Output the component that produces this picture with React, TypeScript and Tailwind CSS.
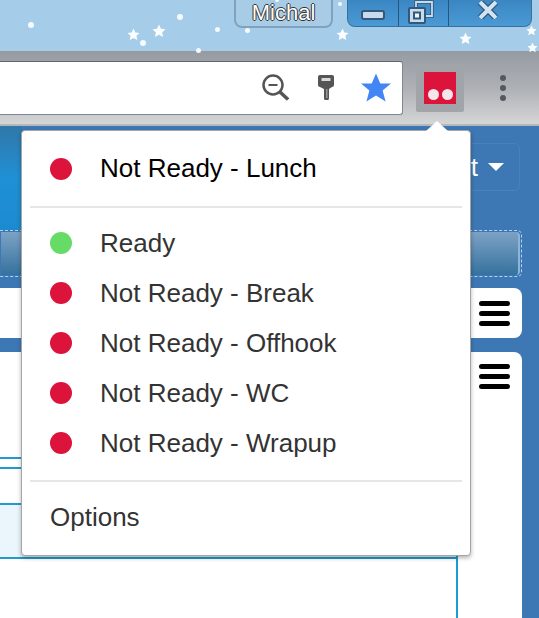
const stars: [number, number, number][] = [
  [133, 34, 13], [159, 31, 14], [342, 34, 13], [465, 38, 13], [531, 30, 11], [532, 47, 11],
];
const dots: [number, number, number][] = [
  [31, 25, 6], [143, 43, 6], [180, 17, 6], [198, 50, 5], [217, 29, 5], [247, 30, 5], [277, 0, 4], [340, 4, 4],
];
const Star = ({ x, y, s }: { x: number; y: number; s: number }) => (
  <svg className="absolute" style={{ left: x - s / 2, top: y - s / 2 }} width={s} height={s} viewBox="0 0 24 24">
    <path d="M12 1l3.4 7.2 7.6 1-5.6 5.3 1.500 7.800L12 18.500l-6.900 3.800 1.500-7.800L1 9.200l7.600-1z" fill="#fbfdff" />
  </svg>
);
const items: [string, string][] = [
  ["Ready", "#66dc66"],
  ["Not Ready - Break", "#dc143c"],
  ["Not Ready - Offhook", "#dc143c"],
  ["Not Ready - WC", "#dc143c"],
  ["Not Ready - Wrapup", "#dc143c"],
];
const Burger = () => (
  <div className="flex w-[31px] flex-col gap-[5px]">
    <div className="h-[5px] rounded-full bg-black" />
    <div className="h-[5px] rounded-full bg-black" />
    <div className="h-[5px] rounded-full bg-black" />
  </div>
);

export default function App() {
  return (
    <div className="relative flex h-[618px] w-[539px] flex-col overflow-hidden bg-white font-['Liberation_Sans',Arial,sans-serif]">
      {/* Desktop strip with window caption */}
      <div className="relative h-[51px] shrink-0 bg-[#a5cdea]">
        <div className="flex h-[28px] justify-end pr-[7px]">
          <div className="mr-[14px] flex h-[28px] w-[99px] items-center justify-center rounded-b-[8px] border-2 border-t-0 border-[#7fa3bf] bg-[#a9cce6] text-[22px] leading-none text-white [text-shadow:-1px_0_#333,1px_0_#333,0_-1px_#333,0_1px_#333]">
            Michal
          </div>
          <div className="flex h-[27px] w-[185px] overflow-hidden rounded-b-[8px] border border-t-0 border-[#3a6f99] bg-gradient-to-b from-[#3a86c2] to-[#4a9ad6]">
            <div className="flex w-[51px] items-center justify-center border-r border-[#28567c]">
              <div className="mt-[3px] h-[10px] w-[24px] rounded-[3px] border-2 border-[#34587a] bg-[#c6dcee]" />
            </div>
            <div className="flex w-[50px] items-start justify-start pl-[9px] pt-0 border-r border-[#28567c]">
              <svg width="26" height="25" viewBox="0 0 26 25">
                <path d="M8 8V2h16v14h-6" fill="none" stroke="#33587a" strokeWidth="3.500" />
                <path d="M8 8V2h16v14h-6" fill="none" stroke="#c6dcee" strokeWidth="1.800" />
                <rect x="1" y="8" width="16" height="15" rx="1" fill="#c6dcee" stroke="#33587a" strokeWidth="2" />
                <rect x="6" y="12.500" width="6" height="6" fill="#f2f7fb" stroke="#33587a" strokeWidth="2" />
              </svg>
            </div>
            <div className="flex flex-1 items-start justify-center pr-[4px] pt-[1px]">
              <svg width="24" height="18" viewBox="0 0 24 18">
                <path d="M4 1l16 16M20 1L4 17" stroke="#33587a" strokeWidth="6.500" />
                <path d="M4 1l16 16M20 1L4 17" stroke="#d2e3f1" strokeWidth="4" />
              </svg>
            </div>
          </div>
        </div>
        {stars.map(([x, y, s], i) => <Star key={i} x={x} y={y} s={s} />)}
        {dots.map(([x, y, s], i) => (
          <div key={i} className="absolute rounded-full bg-[#f4fafe]" style={{ left: x - s / 2, top: y - s / 2, width: s, height: s }} />
        ))}
      </div>

      {/* Browser toolbar */}
      <div className="flex h-[75px] shrink-0 flex-col bg-gradient-to-b from-[#969ba2] via-[#aeb1b6] to-[#d8d8d8]">
        <div className="flex flex-1 items-center">
          <div className="flex h-[54px] w-[403px] items-center justify-end rounded-r-[3px] border-y border-r border-[#7f8790] border-t-[#5f676e] bg-white pr-[11px]">
            <svg className="mr-[29px]" width="27" height="27" viewBox="0 0 27 27">
              <circle cx="11" cy="11" r="9.500" fill="none" stroke="#555" strokeWidth="2.500" />
              <path d="M6.500 11h9" stroke="#555" strokeWidth="2" />
              <path d="M18 18l8 7.500" stroke="#555" strokeWidth="3.500" />
            </svg>
            <svg className="mr-[27px]" width="16" height="25" viewBox="0 0 16 25">
              <path d="M2 0h12a2 2 0 0 1 2 2v8a2 2 0 0 1-2 2l-3 2v9a2.500 2.500 0 0 1-5 0v-9L2 12a2 2 0 0 1-2-2V2a2 2 0 0 1 2-2z" fill="#555" />
              <rect x="3.500" y="3" width="9" height="3" fill="#d9d9d9" />
              <rect x="8" y="14" width="1.500" height="9" fill="#999" />
            </svg>
            <svg width="30" height="29" viewBox="0 0 30 28">
              <path d="M15 0l4.300 10h10.700l-8.400 7 3 11L15 22l-9.600 6 3-11L0 10h10.700z" fill="#4285f4" />
            </svg>
          </div>
          <div className="ml-[13px] flex h-[48px] w-[48px] items-center justify-center rounded-[2px] bg-[#a1a5aa]">
            <div className="flex h-[32px] w-[32px] items-end justify-center gap-[3px] bg-[#dc143c] pb-[4px]">
              <div className="h-[11px] w-[11px] rounded-full bg-[#f6e6ea]" />
              <div className="h-[11px] w-[11px] rounded-full bg-[#f6e6ea]" />
            </div>
          </div>
          <div className="ml-[36px] flex flex-col gap-[4px]">
            <div className="h-[6px] w-[6px] rounded-full bg-[#55595e]" />
            <div className="h-[6px] w-[6px] rounded-full bg-[#55595e]" />
            <div className="h-[6px] w-[6px] rounded-full bg-[#55595e]" />
          </div>
        </div>
        <div className="h-[2px] bg-[#b5b7bb]" />
      </div>

      {/* Page beneath the popup */}
      <div className="flex flex-1 flex-col bg-[#3d78b5]">
        <div className="flex h-[104px] shrink-0 items-start justify-between">
          <div className="h-full w-[22px] bg-gradient-to-b from-[#2f78a8] via-[#1f90d6] to-[#1d8ad0]" />
          <div className="mr-[19px] mt-[17px] flex h-[48px] w-[80px] items-center justify-end rounded-[6px] border border-[#4a81ba] pr-[15px] text-[26px] text-white">
            <span className="mr-[10px]">t</span>
            <div className="h-0 w-0 border-x-[8px] border-t-[8px] border-x-transparent border-t-white" />
          </div>
        </div>
        <div className="mr-[17px] h-[47px] shrink-0 rounded-r-[5px] border-y border-r border-dashed border-[#b5d2ec] p-[1px]">
          <div className="h-full rounded-r-[4px] border-r-2 border-[#8fb4da] bg-gradient-to-b from-[#7ca2c4] to-[#34729f]" />
        </div>
        <div className="h-[11px] shrink-0" />
        <div className="flex h-[50px] shrink-0 justify-between">
          <div className="w-[60px] bg-white" />
          <div className="mr-[17px] flex w-[51px] items-center justify-end rounded-r-[8px] bg-white pr-[12px]">
            <Burger />
          </div>
        </div>
        <div className="h-[14px] shrink-0" />
        <div className="mr-[17px] flex flex-1 rounded-tr-[8px] bg-white">
          <div className="flex w-[458px] flex-col border-r-2 border-[#1f9bcf]">
            <div className="h-[105px]" />
            <div className="h-[12px] border-y-2 border-[#1f9bcf]" />
            <div className="h-[34px]" />
            <div className="h-[56px] border-y-2 border-[#1f9bcf] bg-[#eaf5fc]" />
          </div>
          <div className="flex flex-1 justify-end pr-[12px] pt-[12px]">
            <Burger />
          </div>
        </div>
      </div>

      {/* Status popup */}
      <div className="absolute left-[21px] top-[130px] w-[450px] rounded-[4px] border border-[#a5a5a5] bg-white pb-[3px] shadow-[0_2px_4px_rgba(0,0,0,0.3)]">
        <div className="absolute -top-[10px] right-[22px] h-0 w-0 border-x-[11px] border-b-[10px] border-x-transparent border-b-white" />
        <div className="flex h-[75px] items-center gap-[28px] pl-[28px] text-[26px] text-black">
          <span className="h-[22px] w-[22px] rounded-full bg-[#dc143c]" />
          Not Ready - Lunch
        </div>
        <div className="mx-[8px] h-[2px] bg-[#e6e6e6]" />
        <div className="flex flex-col pb-[12px] pt-[10px]">
          {items.map(([label, color]) => (
            <div key={label} className="flex h-[50px] items-center gap-[28px] pl-[28px] text-[26px] text-[#333]">
              <span className="h-[22px] w-[22px] rounded-full" style={{ backgroundColor: color }} />
              {label}
            </div>
          ))}
        </div>
        <div className="mx-[8px] h-[2px] bg-[#e6e6e6]" />
        <div className="flex h-[70px] items-center pl-[28px] text-[26px] text-[#333]">Options</div>
      </div>
    </div>
  );
}
